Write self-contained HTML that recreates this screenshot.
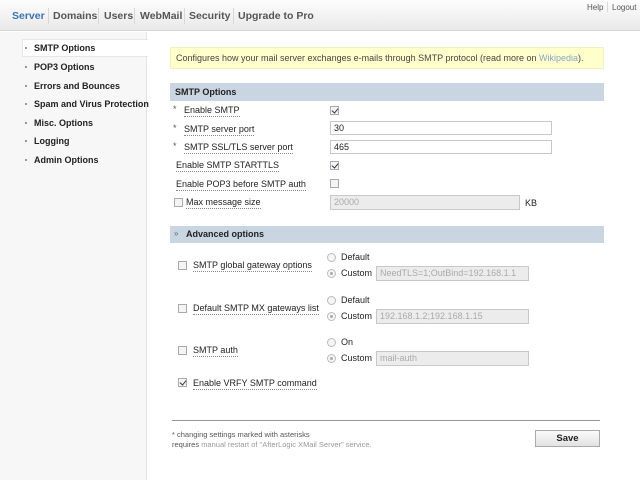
<!DOCTYPE html>
<html><head><meta charset="utf-8"><style>
*{margin:0;padding:0;box-sizing:border-box}
body{width:640px;height:480px;overflow:hidden;background:#fff;font-family:"Liberation Sans",sans-serif;font-size:9px;color:#222;position:relative}
.a{position:absolute;white-space:nowrap}
#hdr{position:absolute;left:0;top:0;width:640px;height:31px;background:linear-gradient(#fdfdfd,#e9e9e9);border-bottom:1px solid #d6d6d6}
.nav{font-weight:bold;font-size:10.5px;color:#555;top:10px}
.sep{position:absolute;top:8px;width:1px;height:16px;background:#d8d8d8}
#side{position:absolute;left:0;top:32px;width:147px;height:448px;background:#f7f7f7;border-right:1px solid #e4e4e4}
.si{font-weight:bold;font-size:9px;color:#222;left:34px}
.dot{position:absolute;left:25px;width:2px;height:2px;background:#999}
.lab{border-bottom:1px dotted #888;line-height:11px}
.cb{position:absolute;width:9px;height:9px;border:1px solid #aaa;background:#f4f4f4}
.ck::after{content:"";position:absolute;left:2px;top:0px;width:3px;height:5px;border:solid #335;border-width:0 1.5px 1.5px 0;transform:rotate(40deg)}
.in{position:absolute;height:14px;border:1px solid #c8c8c8;background:#fff;padding-left:3px;font-size:9px;line-height:12px;color:#222}
.dis{background:#ececec;color:#aaa}
.rb{position:absolute;width:9px;height:9px;border:1px solid #bbb;border-radius:50%;background:#f6f6f6}
.rs::after{content:"";position:absolute;left:2px;top:2px;width:3px;height:3px;border-radius:50%;background:#aaa}
.bar{position:absolute;left:170px;width:434px;background:#c9d5e1;font-weight:bold;font-size:9px;padding-left:5px}
.ast{color:#555;left:173px}
</style></head><body>
<div id="hdr"></div>
<div class="a nav" style="left:12px;color:#3a73b8">Server</div>
<div class="sep" style="left:48px"></div>
<div class="a nav" style="left:53px">Domains</div>
<div class="sep" style="left:98px"></div>
<div class="a nav" style="left:104px">Users</div>
<div class="sep" style="left:134px"></div>
<div class="a nav" style="left:140px">WebMail</div>
<div class="sep" style="left:184px"></div>
<div class="a nav" style="left:189px">Security</div>
<div class="sep" style="left:233px"></div>
<div class="a nav" style="left:238px">Upgrade to Pro</div>
<div class="a" style="left:587px;top:3px;font-size:8px;color:#555">Help</div>
<div class="sep" style="left:607px;top:2px;height:10px"></div>
<div class="a" style="left:612px;top:3px;font-size:8px;color:#555">Logout</div>

<div id="side"></div>
<div style="position:absolute;left:22px;top:39px;width:126px;height:18px;background:#fff;border:1px solid #e6e6e6;border-right:none"></div>
<div class="dot" style="top:47px"></div><div class="a si" style="top:43px">SMTP Options</div>
<div class="dot" style="top:66px"></div><div class="a si" style="top:62px">POP3 Options</div>
<div class="dot" style="top:85px"></div><div class="a si" style="top:81px">Errors and Bounces</div>
<div class="dot" style="top:103px"></div><div class="a si" style="top:99px">Spam and Virus Protection</div>
<div class="dot" style="top:122px"></div><div class="a si" style="top:118px">Misc. Options</div>
<div class="dot" style="top:140px"></div><div class="a si" style="top:136px">Logging</div>
<div class="dot" style="top:159px"></div><div class="a si" style="top:155px">Admin Options</div>

<div style="position:absolute;left:170px;top:47px;width:434px;height:22px;background:#ffffcc;border:1px solid #f3efc0"></div>
<div class="a" style="left:176px;top:53px;color:#444">Configures how your mail server exchanges e-mails through SMTP protocol (read more on <span style="color:#8aa4c8">Wikipedia</span>).</div>

<div class="bar" style="top:83px;height:18px;line-height:18px">SMTP Options</div>
<div class="a ast" style="top:104px">*</div><div class="a lab" style="left:184px;top:105px">Enable SMTP</div>
<div class="cb ck" style="left:330px;top:106px"></div>
<div class="a ast" style="top:123px">*</div><div class="a lab" style="left:184px;top:124px">SMTP server port</div>
<div class="in" style="left:330px;top:121px;width:222px">30</div>
<div class="a ast" style="top:141px">*</div><div class="a lab" style="left:184px;top:142px">SMTP SSL/TLS server port</div>
<div class="in" style="left:330px;top:140px;width:222px">465</div>
<div class="a lab" style="left:176px;top:160px">Enable SMTP STARTTLS</div>
<div class="cb ck" style="left:330px;top:161px"></div>
<div class="a lab" style="left:176px;top:179px">Enable POP3 before SMTP auth</div>
<div class="cb" style="left:330px;top:179px"></div>
<div class="cb" style="left:174px;top:198px"></div>
<div class="a lab" style="left:186px;top:197px">Max message size</div>
<div class="in dis" style="left:330px;top:195px;width:190px;height:15px">20000</div>
<div class="a" style="left:525px;top:198px">KB</div>

<div class="bar" style="top:226px;height:17px;line-height:17px;padding-left:16px">Advanced options</div>
<div class="a" style="left:174px;top:229px;font-size:8px;color:#667">&#187;</div>

<div class="cb" style="left:178px;top:261px"></div><div class="a lab" style="left:193px;top:260px">SMTP global gateway options</div>
<div class="rb" style="left:327px;top:253px"></div><div class="a" style="left:341px;top:252px">Default</div>
<div class="rb rs" style="left:327px;top:269px"></div><div class="a" style="left:341px;top:268px">Custom</div>
<div class="in dis" style="left:376px;top:266px;width:153px;height:15px">NeedTLS=1;OutBind=192.168.1.1</div>

<div class="cb" style="left:178px;top:304px"></div><div class="a lab" style="left:193px;top:303px">Default SMTP MX gateways list</div>
<div class="rb" style="left:327px;top:296px"></div><div class="a" style="left:341px;top:295px">Default</div>
<div class="rb rs" style="left:327px;top:312px"></div><div class="a" style="left:341px;top:311px">Custom</div>
<div class="in dis" style="left:376px;top:309px;width:153px;height:15px">192.168.1.2;192.168.1.15</div>

<div class="cb" style="left:178px;top:346px"></div><div class="a lab" style="left:193px;top:345px">SMTP auth</div>
<div class="rb" style="left:327px;top:338px"></div><div class="a" style="left:341px;top:337px">On</div>
<div class="rb rs" style="left:327px;top:354px"></div><div class="a" style="left:341px;top:353px">Custom</div>
<div class="in dis" style="left:376px;top:351px;width:153px;height:15px">mail-auth</div>

<div class="cb ck" style="left:178px;top:378px"></div><div class="a lab" style="left:193px;top:378px">Enable VRFY SMTP command</div>

<div style="position:absolute;left:172px;top:420px;width:428px;height:1px;background:#999"></div>
<div class="a" style="left:172px;top:430px;font-size:7.5px;color:#555">* changing settings marked with asterisks</div>
<div class="a" style="left:172px;top:440px;font-size:7.5px;color:#555">requires <span style="color:#999">manual restart of "AfterLogic XMail Server" service.</span></div>
<div style="position:absolute;left:535px;top:430px;width:65px;height:17px;border:1px solid #aaa;background:linear-gradient(#fafafa,#e2e2e2);font-weight:bold;font-size:9.5px;text-align:center;line-height:15px">Save</div>
</body></html>
